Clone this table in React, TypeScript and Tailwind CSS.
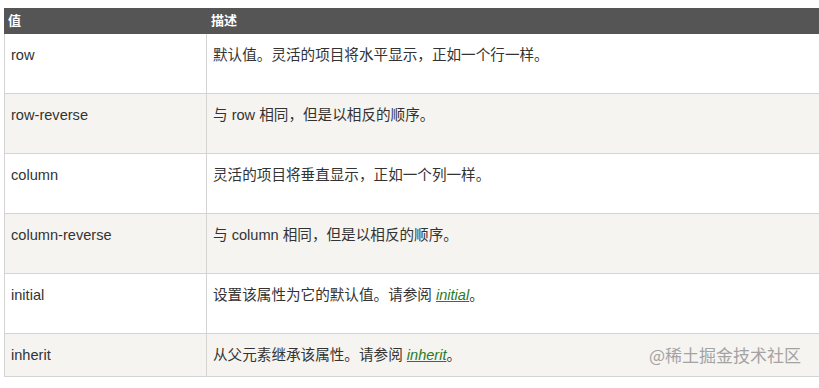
const rows: { value: string; desc: React.ReactNode }[] = [
  { value: "row", desc: "默认值。灵活的项目将水平显示，正如一个行一样。" },
  { value: "row-reverse", desc: "与 row 相同，但是以相反的顺序。" },
  { value: "column", desc: "灵活的项目将垂直显示，正如一个列一样。" },
  { value: "column-reverse", desc: "与 column 相同，但是以相反的顺序。" },
  {
    value: "initial",
    desc: (
      <>
        设置该属性为它的默认值。请参阅 <a className="italic text-[#2d7a1f] underline">initial</a>。
      </>
    ),
  },
  {
    value: "inherit",
    desc: (
      <>
        从父元素继承该属性。请参阅 <a className="italic text-[#2d7a1f] underline">inherit</a>。
      </>
    ),
  },
];

export default function App() {
  return (
    <div
      className="relative h-[388px] w-[819px] overflow-hidden bg-white pl-[4px] pt-[8px] text-[#333]"
      style={{ fontFamily: '"Liberation Sans", Arial, "Noto Sans CJK SC", sans-serif' }}
    >
      <div className="grid grid-cols-[203px_1fr] bg-[#555] text-[13px] font-bold text-white h-[26px] items-center">
        <div className="pl-[4px]">值</div>
        <div className="pl-[4px]">描述</div>
      </div>
      {rows.map((r, i) => (
        <div
          key={r.value}
          className={
            "grid grid-cols-[203px_1fr] border-b border-[#d4d4d4] text-[14.6px] " +
            (i % 2 === 1 ? "bg-[#f6f4f0] " : "bg-white ") +
            (i === rows.length - 1 ? "h-[43px]" : "h-[60px]")
          }
        >
          <div className="border-l border-r border-[#d4d4d4] pl-[6px] pt-[11px]">{r.value}</div>
          <div className="pl-[6px] pt-[11px]">{r.desc}</div>
        </div>
      ))}
      <div
        className="absolute left-[649px] top-[342px] text-[17px] text-[#a3a3a3]"
        style={{ fontFamily: '"Noto Sans CJK SC", sans-serif' }}
      >
        @稀土掘金技术社区
      </div>
    </div>
  );
}
